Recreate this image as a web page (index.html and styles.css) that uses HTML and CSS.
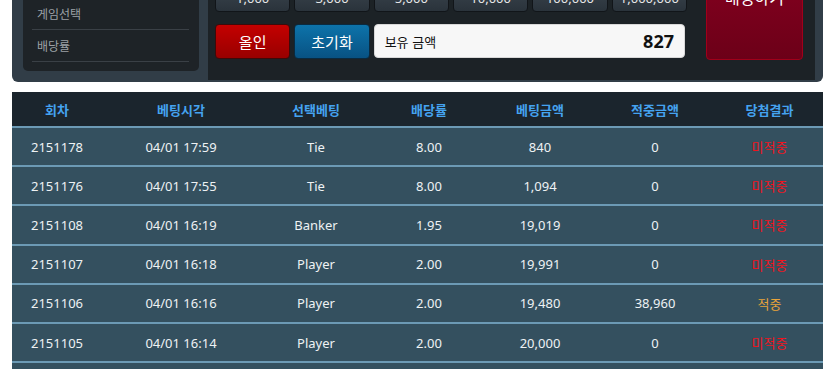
FILE: index.html
```html
<!DOCTYPE html>
<html lang="ko">
<head>
<meta charset="utf-8">
<title>베팅</title>
<link rel="stylesheet" href="styles.css">
</head>
<body>
<div class="wrap">
  <section class="panel">
    <nav class="side">
      <div class="side-item">게임방법</div>
      <div class="side-item">게임선택</div>
      <div class="side-item">배당률</div>
    </nav>
    <div class="main">
      <div class="controls">
        <div class="info-row">
          <div class="info">회차 2151179</div>
          <div class="info">남은시간 00:25</div>
        </div>
        <div class="chips">
          <button class="chip">1,000</button>
          <button class="chip">3,000</button>
          <button class="chip">5,000</button>
          <button class="chip">10,000</button>
          <button class="chip">100,000</button>
          <button class="chip">1,000,000</button>
        </div>
        <div class="actions">
          <button class="act act-red">올인</button>
          <button class="act act-blue">초기화</button>
          <div class="balance">
            <span class="bal-label">보유 금액</span>
            <span class="bal-value">827</span>
          </div>
        </div>
      </div>
      <button class="bet">배팅하기</button>
    </div>
  </section>

  <table class="history">
    <colgroup>
      <col class="c1"><col class="c2"><col class="c3"><col class="c4"><col class="c5"><col class="c6"><col class="c7">
    </colgroup>
    <thead>
      <tr><th>회차</th><th>베팅시각</th><th>선택베팅</th><th>배당률</th><th>베팅금액</th><th>적중금액</th><th>당첨결과</th></tr>
    </thead>
    <tbody>
      <tr><td>2151178</td><td>04/01 17:59</td><td>Tie</td><td>8.00</td><td>840</td><td>0</td><td class="lose">미적중</td></tr>
      <tr><td>2151176</td><td>04/01 17:55</td><td>Tie</td><td>8.00</td><td>1,094</td><td>0</td><td class="lose">미적중</td></tr>
      <tr><td>2151108</td><td>04/01 16:19</td><td>Banker</td><td>1.95</td><td>19,019</td><td>0</td><td class="lose">미적중</td></tr>
      <tr><td>2151107</td><td>04/01 16:18</td><td>Player</td><td>2.00</td><td>19,991</td><td>0</td><td class="lose">미적중</td></tr>
      <tr><td>2151106</td><td>04/01 16:16</td><td>Player</td><td>2.00</td><td>19,480</td><td>38,960</td><td class="win">적중</td></tr>
      <tr><td>2151105</td><td>04/01 16:14</td><td>Player</td><td>2.00</td><td>20,000</td><td>0</td><td class="lose">미적중</td></tr>
      <tr><td>2151104</td><td>04/01 16:13</td><td>Banker</td><td>1.95</td><td>10,000</td><td>0</td><td class="lose">미적중</td></tr>
    </tbody>
  </table>
</div>
</body>
</html>
```
FILE: styles.css
```css
* { box-sizing: border-box; }
html, body { margin: 0; padding: 0; background: #ffffff; }
body {
  font-family: "Noto Sans", "Noto Sans CJK KR", sans-serif;
  overflow: hidden;
}
.wrap {
  margin: -76px 12px 0 12px;
  width: 811px;
}
.panel {
  display: flex;
  gap: 9px;
  background: #313d47;
  border-radius: 0 0 6px 6px;
  padding: 0 8px 2px 11px;
}
.side {
  width: 176px;
  align-self: flex-end;
  margin-bottom: 9px;
  background: #1e2327;
  border-radius: 0 0 5px 5px;
  padding: 0 10px 9px 9px;
}
.side-item {
  height: 32px;
  line-height: 31px;
  padding-left: 5px;
  border-bottom: 1px solid #3a4046;
  color: #9ca1a6;
  font-size: 12px;
  font-family: "Noto Sans CJK KR", sans-serif;
}
.main {
  flex: 1;
  display: flex;
  align-items: flex-start;
  gap: 19px;
  background: #1c2226;
  padding: 10px 12px 20px 7px;
}
.controls {
  width: 472px;
  display: flex;
  flex-direction: column;
  gap: 12px;
}
.info-row {
  height: 31px;
  display: flex;
  gap: 10px;
  color: #ccc;
  font-size: 12px;
  align-items: center;
}
.chips {
  display: grid;
  grid-template-columns: repeat(6, 1fr);
  gap: 4px;
}
.chip {
  height: 35px;
  border: 1px solid #111519;
  border-radius: 4px;
  background: linear-gradient(#404a54, #2a333b);
  color: #e6e6e6;
  font-family: "Noto Sans", sans-serif;
  font-size: 13px;
  padding: 6px 0 0 0;
}
.actions {
  display: grid;
  grid-template-columns: repeat(6, 1fr);
  gap: 4px;
  height: 35px;
}
.act {
  border-radius: 4px;
  color: #ffffff;
  font-family: "Noto Sans CJK KR", sans-serif;
  font-size: 15px;
  padding: 0;
}
.act-red {
  background: linear-gradient(#c40000, #980000);
  border: 1px solid #3d0a0a;
}
.act-blue {
  background: linear-gradient(#0d73aa, #085283);
  border: 1px solid #0a2a40;
}
.balance {
  grid-column: 3 / 7;
  margin-right: 2px;
  height: 34px;
  background: #f7f7f7;
  border: 1px solid #d8d8d8;
  border-radius: 4px;
  display: flex;
  align-items: center;
  justify-content: space-between;
  padding: 0 10px 0 10px;
}
.bal-label {
  font-family: "Noto Sans CJK KR", sans-serif;
  font-size: 13px;
  color: #111;
}
.bal-value {
  font-family: "Noto Sans", sans-serif;
  font-weight: bold;
  font-size: 18px;
  color: #111;
}
.bet {
  width: 97px;
  height: 126px;
  border: 1px solid #a0001a;
  border-radius: 4px;
  background: linear-gradient(#8e0022, #6c0018);
  color: #ffffff;
  font-family: "Noto Sans CJK KR", sans-serif;
  font-size: 16px;
  padding: 0;
}
.history {
  margin-top: 10px;
  width: 811px;
  border-collapse: collapse;
  table-layout: fixed;
  font-size: 13px;
}
.c1 { width: 90px; }
.c2 { width: 158px; }
.c3 { width: 112px; }
.c4 { width: 114px; }
.c5 { width: 108px; }
.c6 { width: 122px; }
.c7 { width: 107px; }
.history th {
  height: 35px;
  padding: 0;
  background: #1b252d;
  color: #45a3f0;
  font-family: "Noto Sans CJK KR", sans-serif;
  font-weight: bold;
  font-size: 13px;
  text-align: center;
}
.history td {
  height: 39.2px;
  padding: 0;
  background: #34505f;
  color: #eef2f4;
  border-top: 2px solid #6c9ab5;
  text-align: center;
}
.history td.lose {
  color: #f0141e;
  font-family: "Noto Sans CJK KR", sans-serif;
}
.history td.win {
  color: #e8a43a;
  font-family: "Noto Sans CJK KR", sans-serif;
}
```
